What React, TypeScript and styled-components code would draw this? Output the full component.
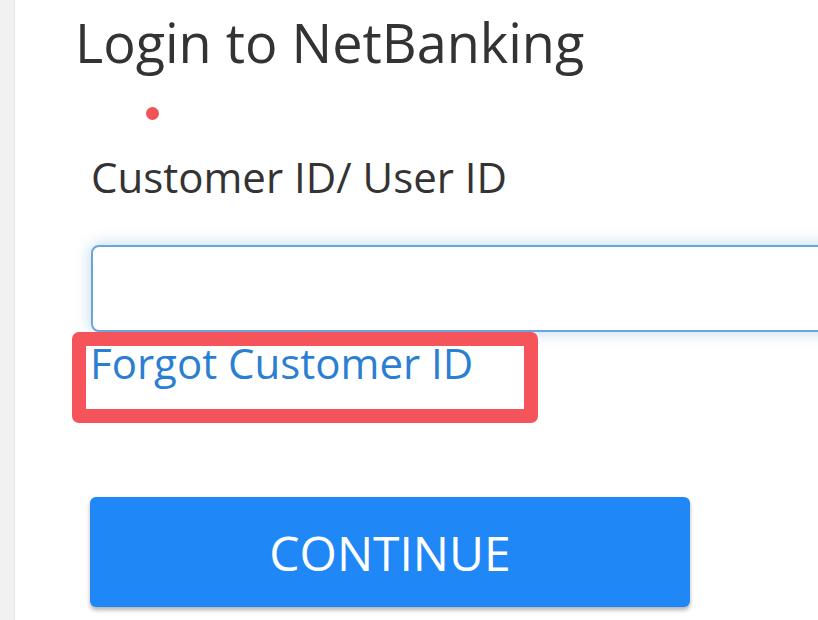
import styled, { createGlobalStyle } from 'styled-components';

const GlobalStyle = createGlobalStyle`
  html, body {
    margin: 0;
    padding: 0;
    background: #ffffff;
    overflow: hidden;
  }
  body {
    font-family: 'Open Sans', 'Liberation Sans', sans-serif;
  }
`;

const App = () => {
  return (
    <>
      <GlobalStyle />
      <Page>
        <SideStrip />
        <Main>
          <Title>Login to NetBanking</Title>
          <Dot />
          <FieldLabel htmlFor="customer-id">Customer ID/ User ID</FieldLabel>
          <Input id="customer-id" type="text" />
          <Highlight>
            <ForgotLink href="#">Forgot Customer ID</ForgotLink>
          </Highlight>
          <ContinueButton type="button">CONTINUE</ContinueButton>
        </Main>
      </Page>
    </>
  );
};

export default App;

const Page = styled.div`
  display: flex;
  width: 818px;
  height: 620px;
  overflow: hidden;
  background: #ffffff;
`;

const SideStrip = styled.div`
  flex: 0 0 14px;
  background: #f1f1f1;
  border-right: 1px solid #e6e6e6;
`;

const Main = styled.main`
  display: flex;
  flex-direction: column;
  align-items: flex-start;
  padding: 7px 0 0 57px;
  flex: 1;
  min-width: 0;
`;

const Title = styled.h1`
  margin: 0 0 0 3px;
  font-size: 54px;
  font-weight: 400;
  line-height: 70px;
  color: #333333;
`;

const Dot = styled.span`
  display: block;
  width: 13px;
  height: 13px;
  margin: 30px 0 0 74px;
  border-radius: 50%;
  background: #f05358;
`;

const FieldLabel = styled.label`
  display: block;
  margin: 30px 0 0 19px;
  font-size: 42px;
  line-height: 54px;
  color: #333333;
`;

const Input = styled.input`
  display: block;
  box-sizing: border-box;
  width: 760px;
  height: 87px;
  margin: 41px 0 0 19px;
  border: 2px solid #6aa6dc;
  border-radius: 8px;
  background: #ffffff;
  box-shadow: 0 0 16px rgba(100, 165, 225, 0.45);
  outline: none;
`;

const Highlight = styled.div`
  box-sizing: border-box;
  width: 466px;
  height: 91px;
  padding: 0 0 0 4px;
  border: 14px solid #f5545a;
  border-radius: 7px;
  background: #ffffff;
`;

const ForgotLink = styled.a`
  display: block;
  margin-top: -10px;
  font-size: 42px;
  line-height: 54px;
  color: #2b7fd2;
  text-decoration: none;
`;

const ContinueButton = styled.button`
  width: 600px;
  height: 110px;
  margin: 74px 0 0 18px;
  border: none;
  border-radius: 6px;
  background: #1f88f6;
  box-shadow: 0 3px 4px rgba(0, 0, 0, 0.3);
  color: #ffffff;
  font-family: 'Open Sans', 'Liberation Sans', sans-serif;
  font-size: 48px;
  font-weight: 400;
  cursor: pointer;
`;
